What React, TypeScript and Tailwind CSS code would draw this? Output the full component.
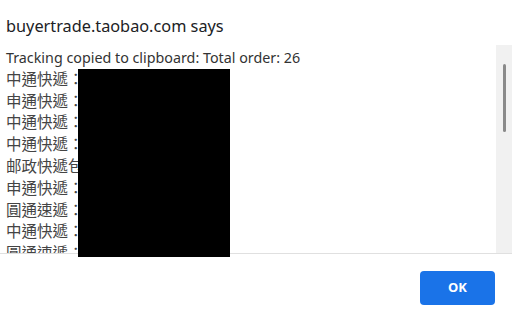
import React from "react";

const lines = [
  "中通快遞：",
  "申通快遞：",
  "中通快遞：",
  "中通快遞：",
  "邮政快遞包裹：",
  "申通快遞：",
  "圓通速遞：",
  "中通快遞：",
  "圓通速遞：",
];

export default function App() {
  return (
    <div
      className="relative flex h-[320px] w-[512px] flex-col overflow-hidden bg-white text-[#202124]"
      style={{ fontFamily: '"Noto Sans", "Noto Sans CJK TC", sans-serif' }}
    >
      <div className="h-[45px] pl-[6px] pt-[15px] text-[16.3px] leading-[22px]">
        buyertrade.taobao.com says
      </div>

      <div className="flex h-[209px] border-b border-[#e0e0e0]">
        <div className="flex-1 overflow-hidden pl-[6px] pt-[2px] text-[#333]">
          <div className="text-[14.3px] leading-[21.8px]">
            Tracking copied to clipboard: Total order: 26
          </div>
          {lines.map((l, i) => (
            <div key={i} className="whitespace-nowrap text-[15.5px] leading-[21.8px] text-[#444]">
              {l}
            </div>
          ))}
        </div>
        <div className="flex w-[16px] justify-center bg-[#f1f1f1] pt-[19px]">
          <div className="h-[68px] w-[3px] rounded-full bg-[#8a8a8a]" />
        </div>
      </div>

      <div className="flex flex-1 items-start justify-end pr-[17px] pt-[17px]">
        <button className="h-[34px] w-[75px] rounded-[4px] bg-[#1a73e8] text-[13px] font-bold text-white">
          OK
        </button>
      </div>

      <div className="absolute left-[78px] top-[69px] h-[188px] w-[152px] bg-black" />
    </div>
  );
}
